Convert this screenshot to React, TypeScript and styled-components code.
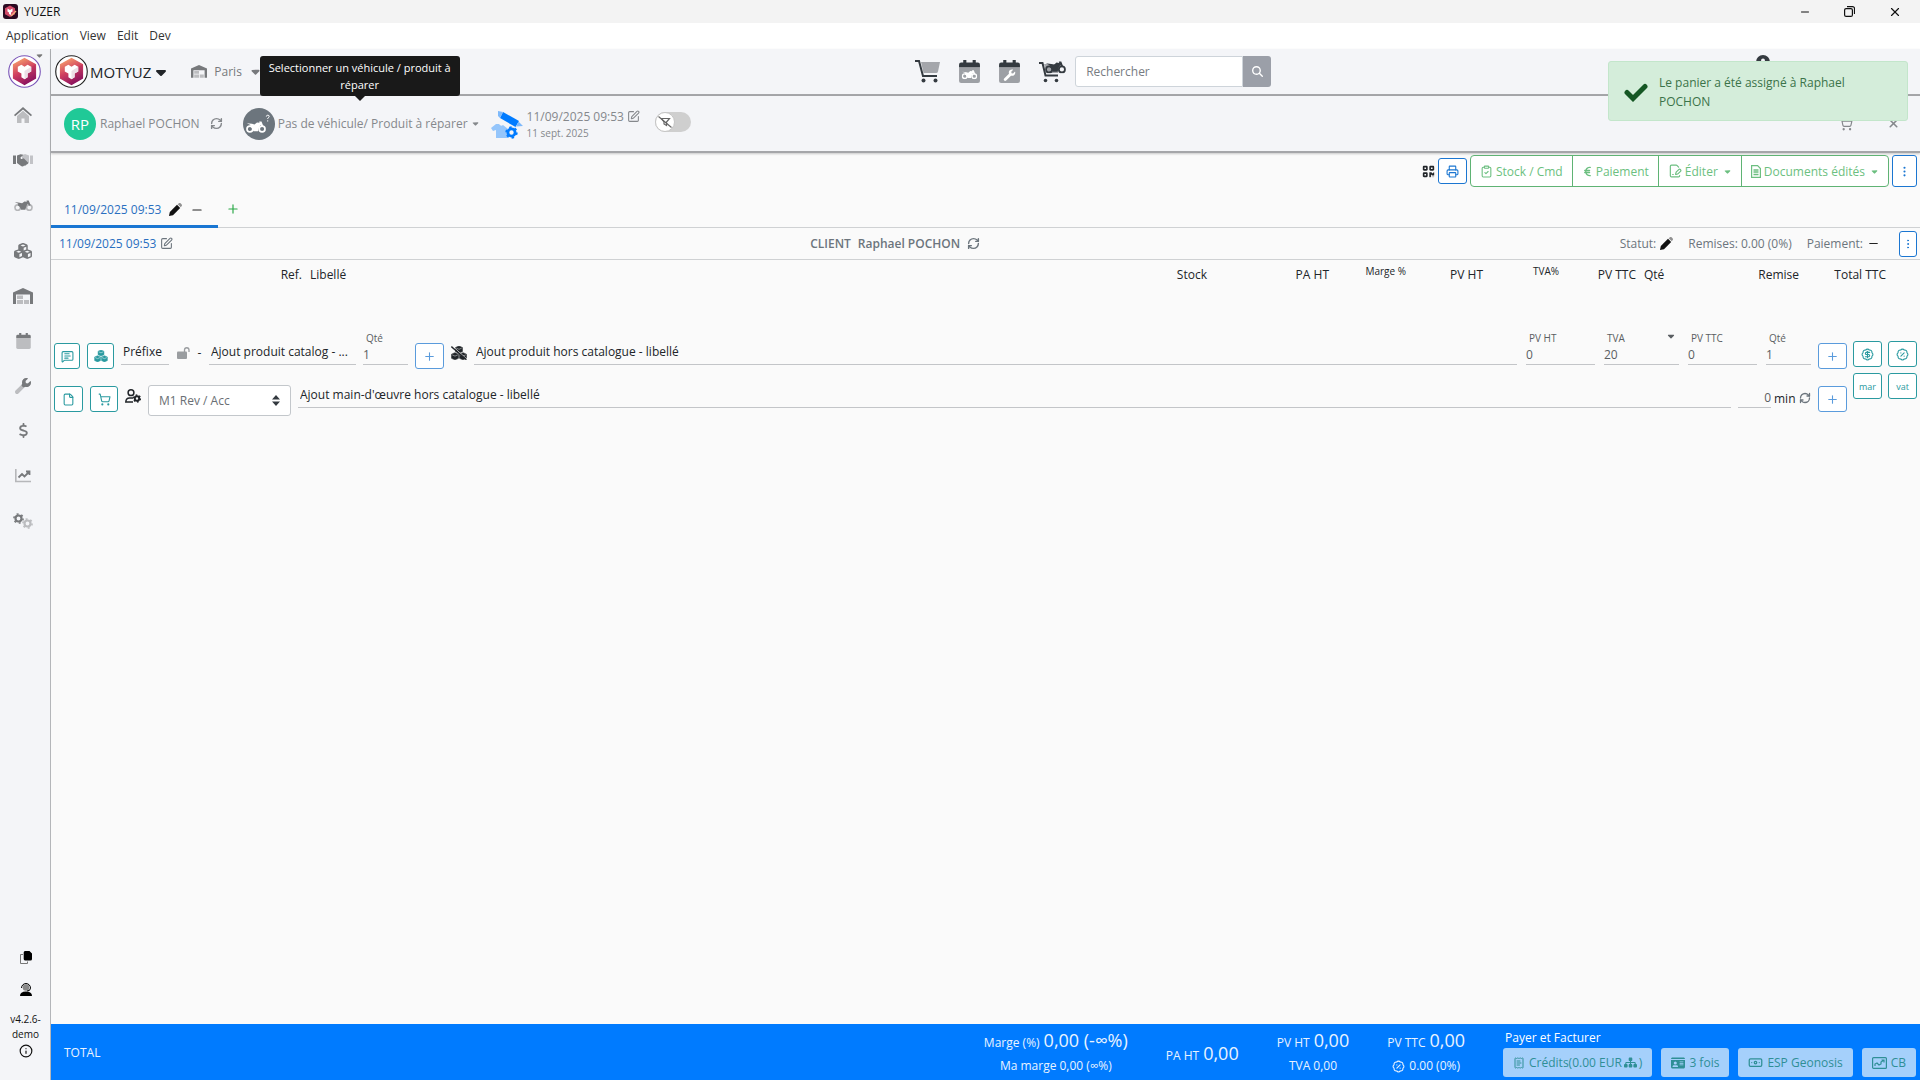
import React from "react";
import styled, { createGlobalStyle, css } from "styled-components";
import { FaDollarSign, FaCaretDown, FaMagnifyingGlass, FaSitemap, FaQrcode, FaCubes, FaCircleUser, FaIdCard, FaEuroSign } from "react-icons/fa6";
import {
  Printer, ClipboardCheck, MessageSquareText, File, EllipsisVertical, Plus, Minus, X,
  SquarePen, RefreshCw, BadgePercent, BadgeDollarSign, ShoppingCart, Info, FilePenLine, Banknote, ReceiptText,
} from "lucide-react";

const Global = createGlobalStyle`
  * { box-sizing: border-box; }
  body { margin: 0; background: #fafafa; }
  body, button, input, select {
    font-family: "Open Sans", "Noto Sans", sans-serif;
    font-size: 12px;
    color: #212529;
  }
  button { cursor: pointer; padding: 0; margin: 0; background: none; border: 0; }
  a { text-decoration: none; color: inherit; }
  svg { flex: none; display: block; }
`;

const Window = styled.div`
  display: flex;
  flex-direction: column;
  min-height: 100vh;
  line-height: 18px;
`;
const TitleBar = styled.header`
  display: flex;
  align-items: center;
  height: 23px;
  padding: 0 3px;
  gap: 6px;
  background: #f3f3f3;
  color: #111;
`;
const WindowControls = styled.div`
  display: flex;
  margin-left: auto;
`;
const WindowButton = styled.button`
  width: 45px;
  height: 20px;
  display: grid;
  place-items: center;
`;
const MenuBar = styled.nav`
  display: flex;
  align-items: center;
  gap: 11px;
  height: 26px;
  padding: 0 6px 2px;
  background: #fff;
`;
const MenuItem = styled.button`
  color: #333;
`;
const Shell = styled.div`
  display: flex;
  flex: 1;
`;
const Sidebar = styled.aside`
  width: 51px;
  flex: none;
  display: flex;
  flex-direction: column;
  align-items: center;
  background: #f4f5f8;
  border-right: 1px solid #b4b6b9;
  padding: 6px 1px 22px 0;
`;
const SideLogo = styled.button`
  position: relative;
  margin-bottom: 5px;
`;
const SideCaret = styled.span`
  position: absolute;
  right: -3px;
  top: -4px;
  color: #777;
`;
const SideLink = styled.a`
  height: 45px;
  width: 100%;
  padding-right: 3px;
  display: grid;
  place-items: center;
  color: #77797c;
`;
const SideFoot = styled.div`
  margin-top: auto;
  display: flex;
  flex-direction: column;
  align-items: center;
  width: 100%;
  font-size: 10px;
  line-height: 15px;
  text-align: center;
  color: #111;
  padding-left: 2px;
`;
const SideTool = styled.button`
  height: 32px;
  width: 32px;
  display: grid;
  place-items: center;
`;
const Version = styled.div`
  padding: 7px 0 2px;
`;
const Main = styled.main`
  flex: 1;
  min-width: 0;
  display: flex;
  flex-direction: column;
`;
const bar = css`
  background: #f4f5f8;
  border-bottom: 2px solid #a5a6a9;
  box-shadow: 0 1px 2px rgba(0, 0, 0, 0.2);
`;
const TopNav = styled.div`
  ${bar}
  display: grid;
  grid-template-columns: minmax(0, 57fr) auto minmax(0, 43fr);
  align-items: center;
  height: 47px;
  padding-left: 4px;
`;
const NavLeft = styled.div`
  display: flex;
  align-items: center;
  gap: 22px;
`;
const Brand = styled.button`
  display: flex;
  align-items: center;
  gap: 2px;
  font-size: 15px;
`;
const Place = styled.button`
  display: flex;
  align-items: center;
  gap: 7px;
  color: #77797c;
`;
const NavCenter = styled.div`
  display: flex;
  align-items: center;
  gap: 19px;
  color: #343a40;
`;
const NavIcon = styled.button`
  color: inherit;
`;
const Search = styled.form`
  display: flex;
  height: 31px;
  margin-left: -10px;
`;
const SearchInput = styled.input`
  width: 168px;
  padding: 0 10px;
  border: 1px solid #ced4da;
  border-radius: 3px 0 0 3px;
  background: #fff;
  &::placeholder { color: #777c82; opacity: 1; }
`;
const SearchButton = styled.button`
  width: 28px;
  display: grid;
  place-items: center;
  color: #fff;
  background: #9b9fa8;
  border-radius: 0 3px 3px 0;
`;
const NavRight = styled.div`
  justify-self: end;
  margin: 0 150px 20px 0;
  color: #343a40;
`;
const ClientBar = styled.div`
  ${bar}
  display: flex;
  align-items: center;
  height: 57px;
  padding: 0 14px 0 13px;
  color: #85888c;
`;
const Round = styled.span<{ $color: string }>`
  width: 32px;
  height: 32px;
  border-radius: 50%;
  display: grid;
  place-items: center;
  background: ${(p) => p.$color};
  color: #fff;
  font-size: 15px;
`;
const Person = styled.div`
  display: flex;
  align-items: center;
  gap: 4px;
  margin-right: 14px;
`;
const IconButton = styled.button`
  color: inherit;
  display: grid;
  place-items: center;
  padding: 0 6px;
`;
const VehicleButton = styled.button`
  position: relative;
  display: flex;
  align-items: center;
  gap: 3px;
  color: inherit;
  margin-right: 11px;
`;
const Tooltip = styled.span`
  position: absolute;
  z-index: 2;
  left: 17px;
  bottom: 44px;
  width: 200px;
  height: 40px;
  padding: 3px 4px;
  border-radius: 3px;
  background: #191919;
  color: #fff;
  font-size: 11px;
  font-weight: 500;
  line-height: 17px;
  text-align: center;
  &::after {
    content: "";
    position: absolute;
    left: 95px;
    top: 40px;
    border: 5px solid transparent;
    border-top-color: #191919;
    border-bottom: 0;
  }
`;
const DateBlock = styled.div`
  display: flex;
  align-items: center;
  gap: 4px;
  line-height: 17px;
  padding-top: 2px;
`;
const DateLine = styled.div`
  display: flex;
  align-items: center;
  gap: 3px;
`;
const Small = styled.div`
  font-size: 10px;
`;
const Toggle = styled.label`
  display: flex;
  width: 36px;
  height: 20px;
  margin: 0 0 3px 15px;
  border-radius: 10px;
  background: #cfcfcf;
  input { appearance: none; margin: 0; width: 0; }
`;
const Knob = styled.span`
  width: 20px;
  height: 20px;
  border-radius: 50%;
  display: grid;
  place-items: center;
  background: #fff;
  border: 1px solid #c4c4c4;
`;
const BarEnd = styled.div`
  margin-left: auto;
  display: flex;
  align-items: center;
  gap: 22px;
`;
const Toast = styled.div`
  position: absolute;
  z-index: 3;
  top: 61px;
  right: 12px;
  width: 300px;
  min-height: 60px;
  display: flex;
  align-items: center;
  gap: 11px;
  padding: 11px 50px 9px 15px;
  border: 1px solid #c3e6cb;
  border-radius: 3px;
  background: #d4edda;
  color: #3b7349;
  line-height: 19px;
  svg { color: #155724; }
`;
const Actions = styled.div`
  display: flex;
  align-items: center;
  justify-content: flex-end;
  gap: 3px;
  padding: 1px 3px 0;
  height: 35px;
`;
const Outline = styled.button<{ $w: number; $h: number; $c: string }>`
  width: ${(p) => p.$w}px;
  height: ${(p) => p.$h}px;
  display: grid;
  place-items: center;
  flex: none;
  border: 1px solid ${(p) => p.$c};
  border-radius: 3px;
  color: ${(p) => p.$c};
  background: #fff;
  font-size: 9px;
`;
const Group = styled.div`
  display: flex;
  border: 1px solid #5fb374;
  border-radius: 4px;
  background: #fff;
`;
const GroupButton = styled.button`
  height: 30px;
  display: flex;
  align-items: center;
  gap: 3px;
  padding: 0 9px;
  color: #6cbf80;
  & + & { border-left: 1px solid #5fb374; }
`;
const GroupCaret = styled(FaCaretDown)`
  margin-left: 2px;
`;
const Tabs = styled.div`
  display: flex;
  height: 40px;
  border-bottom: 1px solid #cfd1d3;
`;
const Tab = styled.div`
  display: flex;
  align-items: center;
  gap: 8px;
  width: 167px;
  padding: 6px 0 0 13px;
  margin-bottom: -1px;
  border-bottom: 3px solid #1976d2;
  color: #2a6fc0;
`;
const AddTab = styled.button`
  padding: 3px 8px 0;
  color: #28a745;
`;
const CartHead = styled.div`
  display: grid;
  grid-template-columns: minmax(0, 89fr) auto minmax(0, 111fr);
  align-items: center;
  height: 32px;
  padding: 0 3px 0 8px;
  border-bottom: 1px solid #cfd1d3;
  color: #6c757d;
`;
const Stamp = styled.div`
  display: flex;
  align-items: center;
  gap: 4px;
  color: #2a6fc0;
  svg { color: #6c757d; }
`;
const Client = styled.div`
  display: flex;
  align-items: center;
  gap: 7px;
  font-weight: 600;
`;
const Status = styled.div`
  display: flex;
  align-items: center;
  justify-content: flex-end;
  gap: 15px;
  span { display: flex; align-items: center; gap: 4px; }
  span:last-of-type { margin-right: 4px; }
`;
const Lines = styled.table`
  width: 100%;
  table-layout: fixed;
  border-collapse: collapse;
  margin: 4px 0 44px;
  th { padding: 0 4px; height: 22px; font-weight: 500; text-align: right; white-space: nowrap; }
`;
const ThLeft = styled.th`
  && { text-align: left; }
`;
const ThSmall = styled.th`
  font-size: 10px;
  vertical-align: top;
  line-height: 14px;
`;
const Entry = styled.form`
  display: flex;
  gap: 6px;
  padding: 0 3px;
`;
const EntryRows = styled.div`
  flex: 1;
  min-width: 0;
`;
const EntryRow = styled.div`
  display: flex;
  align-items: flex-end;
  gap: 7px;
  height: 43px;
  > button { margin-bottom: 4px; }
`;
const Mark = styled.span<{ $w: number; $dim?: boolean }>`
  width: ${(p) => p.$w}px;
  margin-bottom: 11px;
  min-height: 18px;
  display: grid;
  place-items: center;
  color: ${(p) => (p.$dim ? "#9a9da0" : "#212529")};
`;
const line = css`
  border: 0;
  border-bottom: 1px solid #c3c5c8;
  border-radius: 0;
  background: transparent;
  padding: 0;
  outline: 0;
  min-width: 0;
`;
const TextField = styled.input<{ $w?: number }>`
  ${line}
  ${(p) => (p.$w ? `width: ${p.$w}px;` : "flex: 1;")}
  height: 26px;
  margin-bottom: 8px;
  padding: 0 2px;
  text-overflow: ellipsis;
  &::placeholder { color: #212529; opacity: 1; }
`;
const NumberField = styled.label<{ $w: number }>`
  width: ${(p) => p.$w}px;
  margin-bottom: 8px;
  font-size: 10px;
  line-height: 14px;
  color: #5a5e62;
  input { ${line} display: block; width: 100%; height: 20px; color: #5a5e62; }
`;
const LabelText = styled.span`
  display: flex;
  justify-content: space-between;
  padding: 0 3px;
`;
const Fields = styled.div`
  display: flex;
  gap: 9px;
  padding-left: 2px;
`;
const Duration = styled.label`
  display: flex;
  align-items: flex-end;
  gap: 3px;
  width: 73px;
  margin-bottom: 8px;
  svg { margin-bottom: 4px; color: #6c757d; }
  input { ${line} width: 33px; height: 20px; text-align: right; color: #5a5e62; }
`;
const SelectWrap = styled.label`
  position: relative;
  width: 143px;
  svg { position: absolute; right: 11px; top: 10px; pointer-events: none; }
`;
const Select = styled.select`
  appearance: none;
  width: 100%;
  height: 31px;
  display: block;
  padding: 0 10px;
  border: 1px solid #c3c7cb;
  border-radius: 3px;
  background: #fff;
  color: #6a6f74;
`;
const SideGrid = styled.div`
  display: grid;
  grid-template-columns: 29px 29px;
  grid-auto-rows: 26px;
  gap: 6px;
  margin-top: 11px;
`;
const Footer = styled.footer`
  margin-top: auto;
  display: flex;
  align-items: center;
  gap: 38px;
  height: 56px;
  padding: 2px 4px 0 13px;
  background: #007bff;
  color: #e9f3ff;
`;
const Total = styled.strong`
  font-weight: 400;
  margin-right: auto;
`;
const Sum = styled.div`
  text-align: center;
  white-space: nowrap;
`;
const SumLine = styled.div`
  display: flex;
  justify-content: center;
  align-items: baseline;
  gap: 4px;
  height: 26px;
  line-height: 26px;
  b { font-weight: 400; font-size: 18px; }
  svg { align-self: center; }
`;
const Pay = styled.div`
  display: flex;
  flex-direction: column;
  > span { padding-left: 2px; color: #fff; }
`;
const PayRow = styled.div`
  display: flex;
  gap: 9px;
  margin-top: 1px;
`;
const PayButton = styled.button`
  display: flex;
  align-items: center;
  gap: 4px;
  height: 29px;
  padding: 0 10px;
  border-radius: 3px;
  background: #a5d0fb;
  color: #2f8f96;
`;
const PayText = styled.span`
  display: flex;
  align-items: center;
  gap: 2px;
`;

function Logo({ ring }: { ring: string }) {
  return (
    <svg width="33" height="33" viewBox="0 0 32 32">
      <defs>
        <linearGradient id="hex" x1="0.2" y1="0" x2="0.6" y2="1">
          <stop offset="0" stopColor="#f7a06c" />
          <stop offset="0.5" stopColor="#d0405f" />
          <stop offset="1" stopColor="#8c1260" />
        </linearGradient>
      </defs>
      <circle cx="16" cy="16" r="15.3" fill="#fff" stroke={ring} strokeWidth="1.1" />
      <path d="M16 3.5 26.5 9.3v13.2L16 28.5 5.5 22.5V9.3z" fill="url(#hex)" stroke="url(#hex)" strokeWidth="1.5" strokeLinejoin="round" />
      <path d="M16 16v12.5l10.5-6V9.3z" fill="#8c1260" opacity=".2" />
      <path d="M9.500 11.500l3.500-2 3 2 3-2 3.500 2v4.500l-3.500 2v3.500L16 23.500 13 21.500V18l-3.500-2z" fill="#fff" />
      <path d="M16 15.500l6.500-4V16L19 18v3.500l-3 2z" fill="#ecdfe6" />
    </svg>
  );
}
const AppIcon = () => (
  <svg width="15" height="15" viewBox="0 0 15 15">
    <rect width="15" height="15" rx="3" fill="#2a0a20" />
    <path d="M7 1.5l5 2.8v6L7 13 2 10.3v-6z" fill="#d24a68" />
    <path d="M4.500 4.500L7 6l2.500-1.500v3L8 8.500V11L6 10V8.500l-1.500-1z" fill="#fff" />
    <path d="M8 12l5-5" stroke="#f2b07b" strokeWidth="1.5" />
  </svg>
);
const Restore = () => (
  <svg width="11" height="11" viewBox="0 0 11 11" fill="none" stroke="#111" strokeWidth="1.2">
    <rect x=".6" y="2.6" width="7.8" height="7.8" rx="1.5" />
    <path d="M3 .6h5.500a2 2 0 0 1 2 2V8" />
  </svg>
);
const House = () => (
  <svg width="18" height="17" viewBox="0 0 18 17" fill="currentColor">
    <path opacity=".45" d="M3 9l6-5.300L15 9v7h-4.500v-4.500h-3V16H3z" />
    <path d="M9 0L18 8l-1.100 1.300L9 2.500 1.100 9.300 0 8z" />
  </svg>
);
const Hands = () => (
  <svg width="20" height="13" viewBox="0 0 20 13" fill="currentColor">
    <path d="M0 1.500h3V10H0z" />
    <path opacity=".4" d="M17 1.500h3V10h-3zM9 1.500l3-1.500 4 1.500V9l-1.500 1L9 5z" />
    <path d="M4 1.500L7.500.3l3 .5L7.500 3.500c0 2 2 2 3.200.8L15 8.500c.3 1-.5 2-1.500 2-.3 1-1.300 1.500-2.300 1-1 1.200-2.500 1.200-3.500.2L4 9z" />
  </svg>
);
const Moto = ({ w = 20, wheel = 1, x, y }: { w?: number; wheel?: number; x?: number; y?: number }) => (
  <svg x={x} y={y} width={w} height={w * 0.6} viewBox="0 0 20 12" fill="currentColor" stroke="none">
    <g opacity={wheel} fill="none" stroke="currentColor" strokeWidth="1.7">
      <circle cx="3.9" cy="8" r="2.9" />
      <circle cx="16.1" cy="8" r="2.9" />
    </g>
    <path d="M.8 2.200l5.200.6 2.500.7L11 1.500l2.500.3L13.200.5h2.300l1 2.500 1 2.500-1.500.5-1.500-2-1.500 2.500-1 3.700H7.500L6 7 4 5.500 4.500 4z" />
  </svg>
);
const Warehouse = ({ w = 20 }: { w?: number }) => (
  <svg width={w} height={w * 0.8} viewBox="0 0 20 16" fill="currentColor">
    <path d="M0 16V4.500L10 0l10 4.500V16h-3V6.500H3V16z" />
    <path opacity=".45" d="M4 7.500h6v3.500H4zM4 12h6v4H4zM11 12h5v4h-5z" />
  </svg>
);
const CalBack = () => (
  <>
    <path opacity=".45" d="M0 7h20v13a2 2 0 0 1-2 2H2a2 2 0 0 1-2-2z" />
    <path d="M4 0h3v2.500h6V0h3v2.500h2a2 2 0 0 1 2 2V7H0V4.500a2 2 0 0 1 2-2h2z" />
  </>
);
const wrenchPath =
  "M507.700 109.100c-2.200-9-13.500-12.100-20.100-5.500l-74.400 74.400-67.900-11.300L334 98.900l74.400-74.400c6.600-6.600 3.400-17.900-5.700-20.200-47.400-11.700-99.600.9-136.600 37.900-39.600 39.600-50.500 97.100-34.100 147.200L18.700 402.800c-25 25-25 65.500 0 90.500 25 25 65.500 25 90.500 0l213.200-213.200c50.100 16.700 107.500 5.700 147.400-34.200 37.100-37.100 49.700-89.300 37.900-136.800z";
const Calendar = () => (
  <svg width="15" height="16" viewBox="0 0 20 22" fill="currentColor"><CalBack /></svg>
);
const CalendarMoto = () => (
  <svg width="21" height="23" viewBox="0 0 20 22" fill="currentColor">
    <CalBack />
    <g color="#fff"><Moto x={2.5} y={9.5} w={15} /></g>
  </svg>
);
const CalendarWrench = () => (
  <svg width="21" height="23" viewBox="0 0 20 22" fill="currentColor">
    <CalBack />
    <path fill="#fff" transform="translate(4.500 9) scale(.0215)" d={wrenchPath} />
  </svg>
);
const Wrench = () => (
  <svg width="16" height="16" viewBox="0 0 512 512" fill="currentColor">
    <clipPath id="wh"><path d="M200 0h312v300H260l-60-80z" /></clipPath>
    <path opacity=".45" d={wrenchPath} />
    <path clipPath="url(#wh)" d={wrenchPath} />
  </svg>
);
const Chart = () => (
  <svg width="16" height="14" viewBox="0 0 16 14" fill="none" stroke="currentColor">
    <path opacity=".5" d="M.8 0v12.500H16" strokeWidth="1.6" />
    <path d="M3.500 8.500L7 5l2.500 2.500L14 3M11 2.500h3.500V6" strokeWidth="1.8" />
  </svg>
);
const Gears = () => (
  <svg width="20" height="16" viewBox="0 0 20 16" fill="none" stroke="currentColor">
    <circle cx="5.5" cy="5.5" r="3" strokeWidth="2.2" />
    <circle cx="5.5" cy="5.5" r="4.6" strokeWidth="1.5" strokeDasharray="2 2.8" />
    <g opacity=".45">
      <circle cx="14.5" cy="10.5" r="3" strokeWidth="2.2" />
      <circle cx="14.5" cy="10.5" r="4.6" strokeWidth="1.5" strokeDasharray="2 2.8" />
    </g>
  </svg>
);
const Cart = () => (
  <svg width="25" height="23" viewBox="0 0 25 23" fill="none" stroke="currentColor">
    <path d="M6 2h19l-2 9.500a2 2 0 0 1-2 1.500H8.500z" fill="currentColor" opacity=".42" stroke="none" />
    <path d="M0 1h4l4 15h14" strokeWidth="2" />
    <circle cx="8.5" cy="20.5" r="2" fill="currentColor" stroke="none" />
    <circle cx="20.5" cy="20.5" r="2" fill="currentColor" stroke="none" />
  </svg>
);
const CartMoto = () => (
  <svg width="27" height="23" viewBox="0 0 27 23" fill="none" stroke="currentColor">
    <path d="M5 4h15l-1 9H8z" fill="currentColor" opacity=".42" stroke="none" />
    <path d="M0 3h3.500l3 12.500H19" strokeWidth="2" />
    <circle cx="6.5" cy="20.5" r="1.8" fill="currentColor" stroke="none" />
    <circle cx="17.5" cy="20.5" r="1.8" fill="currentColor" stroke="none" />
    <Moto x={6} y={1} w={21} />
  </svg>
);
const MotoQuestion = () => (
  <svg width="26" height="20" viewBox="0 0 26 20" fill="currentColor">
    <Moto x={0} y={7} w={20} />
    <path d="M20.300 2.600q.1-1.400 1.500-1.400t1.400 1.200q0 .8-.8 1.200-.7.400-.7 1.400M21.700 6.300v1.200" fill="none" stroke="currentColor" strokeWidth="1" />
  </svg>
);
const Check = () => (
  <svg width="24" height="24" viewBox="0 0 24 24" fill="none" stroke="currentColor" strokeWidth="5" strokeLinecap="round">
    <path d="M3 12.500l6 6L21 6.500" />
  </svg>
);
const FilterOff = () => (
  <svg width="14" height="12" viewBox="0 0 14 12" fill="none" stroke="#666" strokeWidth="1.2">
    <path d="M3.500 2.500h8L8.500 6v3.500L6 8V6z" />
    <path d="M.5.5l13 11" />
  </svg>
);
const Pencil = () => (
  <svg width="13" height="13" viewBox="0 0 13 13" fill="#111">
    <path d="M0 13l.8-4L8 1.800 11.200 5 4 12.200z" />
    <path opacity=".45" d="M8.700 1.200L9.900.3a1.300 1.300 0 0 1 1.700 0l1.100 1.100a1.300 1.300 0 0 1 0 1.700l-.9 1.200z" />
  </svg>
);
const Custom = () => (
  <svg width="32" height="28" viewBox="0 0 32 28" fill="#007bff">
    <path d="M0 17l5-4h3q2 3 4 1l5 4v9H5v-8l-3 1z" fill="#94c5fb" />
    <path d="M12 1l16 9-3.500 6L9 7z" />
    <path d="M7 0l5 1-3 6-2-2z M27.500 10.500l-2.500 5 7-.5z" fill="#7db9fb" />
    <circle cx="20.5" cy="21.5" r="3.6" fill="none" stroke="#007bff" strokeWidth="2.8" />
    <circle cx="20.5" cy="21.5" r="5.4" fill="none" stroke="#007bff" strokeWidth="1.6" strokeDasharray="2.5 3.1" />
  </svg>
);
const Unlock = () => (
  <svg width="13" height="12" viewBox="0 0 13 12" fill="currentColor">
    <rect y="4.5" width="10" height="7.5" rx="1" />
    <path d="M7.500 5V3a2.200 2.200 0 0 1 4.500 0v2" fill="none" stroke="currentColor" strokeWidth="1.3" />
  </svg>
);
const cubes =
  "M7 0l3 1.300v3.500L7 6.200 4 4.800V1.300zM3.500 5.800l3 1.300v3.700l-3 1.300-3-1.300V7.100zM10.500 5.800l3 1.300v3.700l-3 1.300-3-1.300V7.100z";
const cubeEdges = "M4.600 1.800L7 2.900l2.400-1.100M1 7.700l2.500 1.100L6 7.700M8 7.700l2.500 1.100L13 7.700";
const CubesSolid = () => (
  <svg width="14" height="12" viewBox="0 0 14 12.2" fill="currentColor">
    <path d={cubes} stroke="currentColor" strokeWidth=".5" />
    <path d={cubeEdges} fill="none" stroke="#fff" strokeWidth=".5" />
  </svg>
);
const CubesOff = () => (
  <svg width="16" height="14" viewBox="0 0 14 12.2" fill="currentColor">
    <path d={cubes} stroke="currentColor" strokeWidth=".5" />
    <path d={cubeEdges} fill="none" stroke="#fafafa" strokeWidth=".4" />
    <path d="M1.200 0L14 11.500" stroke="#fafafa" strokeWidth=".7" />
    <path d="M.3.500L13.500 12" stroke="#212529" strokeWidth="1.2" />
  </svg>
);
const UserGear = () => (
  <svg width="16" height="14" viewBox="0 0 16 14" fill="none" stroke="currentColor" strokeWidth="1.5">
    <circle cx="6" cy="3.7" r="2.9" />
    <path d="M8 9H4.500Q1 9 .8 13H8" />
    <circle cx="12" cy="9.5" r="2.2" strokeWidth="2" />
    <circle cx="12" cy="9.5" r="3.4" strokeDasharray="1.6 1.96" />
  </svg>
);
const UpDown = () => (
  <svg width="8" height="11" viewBox="0 0 8 11" fill="#343a40"><path d="M4 0l4 4.500H0zM4 11l4-4.500H0z" /></svg>
);
const CopyIcon = () => (
  <svg width="12" height="13" viewBox="0 0 12 13">
    <path d="M5 0h4.500L12 2.500V8a1.500 1.500 0 0 1-1.500 1.500H5A1.500 1.500 0 0 1 3.700 8V1.500A1.500 1.500 0 0 1 5 0z" fill="#000" />
    <path d="M3 3.500H.5v9H7.500v-2" fill="none" stroke="#777" />
  </svg>
);
const Support = () => (
  <svg width="12" height="13" viewBox="0 0 12 13">
    <path d="M0 13c0-3 2-4.500 6-4.500s6 1.500 6 4.500z" />
    <circle cx="6" cy="4.5" r="3.3" fill="#888" />
    <path d="M1.500 5a4.500 4.500 0 0 1 9 0q0 3-3.500 3" fill="none" stroke="#000" />
  </svg>
);
const DocMark = () => (
  <svg width="10" height="13" viewBox="0 0 10 13" fill="none" stroke="currentColor">
    <path d="M.6.6h6L9.400 3.500v8.900H.6z" strokeWidth="1.2" />
    <path d="M2.500 5h5M2.500 7h5M2.500 9.500h5" strokeWidth="1.5" />
  </svg>
);
const CardChart = () => (
  <svg width="15" height="12" viewBox="0 0 15 12" fill="none" stroke="currentColor" strokeWidth="1.2">
    <rect x=".6" y=".6" width="13.8" height="10.8" rx="1" />
    <path d="M3 9V7l2-1 2 2 2-1V5l3-2M9.500 3H12v2.500" />
  </svg>
);
const Refresh = ({ size = 13 }: { size?: number }) => <RefreshCw size={size} strokeWidth={2.6} />;

const BLUE = "#1b76d1";
const TEAL = "#2a9aa0";
const SKY = "#5a9bdc";

const nav: [string, React.ReactNode][] = [
  ["Accueil", <House />],
  ["Clients", <Hands />],
  ["Véhicules", <Moto w={19} wheel={0.5} />],
  ["Produits", <FaCubes size={18} />],
  ["Stock", <Warehouse />],
  ["Agenda", <Calendar />],
  ["Atelier", <Wrench />],
  ["Finance", <FaDollarSign size={15} />],
  ["Statistiques", <Chart />],
  ["Réglages", <Gears />],
];

export default function App() {
  return (
    <Window>
      <Global />
      <TitleBar>
        <AppIcon />
        YUZER
        <WindowControls>
          <WindowButton aria-label="Réduire"><Minus size={12} color="#111" /></WindowButton>
          <WindowButton aria-label="Restaurer"><Restore /></WindowButton>
          <WindowButton aria-label="Fermer"><X size={14} color="#111" /></WindowButton>
        </WindowControls>
      </TitleBar>
      <MenuBar>
        {["Application", "View", "Edit", "Dev"].map((m) => <MenuItem key={m}>{m}</MenuItem>)}
      </MenuBar>
      <Toast role="status">
        <Check />
        Le panier a été assigné à Raphael POCHON
      </Toast>
      <Shell>
        <Sidebar>
          <SideLogo aria-label="Profil">
            <Logo ring="#7a55b8" />
            <SideCaret><FaCaretDown size={9} /></SideCaret>
          </SideLogo>
          {nav.map(([name, icon]) => <SideLink key={name} href="#" aria-label={name}>{icon}</SideLink>)}
          <SideFoot>
            <SideTool aria-label="Copier"><CopyIcon /></SideTool>
            <SideTool aria-label="Support"><Support /></SideTool>
            <Version>v4.2.6-<br />demo</Version>
            <Info size={14} />
          </SideFoot>
        </Sidebar>
        <Main>
          <TopNav>
            <NavLeft>
              <Brand><Logo ring="#222" />MOTYUZ<FaCaretDown size={16} /></Brand>
              <Place><Warehouse w={16} />Paris<FaCaretDown size={13} /></Place>
            </NavLeft>
            <NavCenter>
              <NavIcon aria-label="Panier"><Cart /></NavIcon>
              <NavIcon aria-label="Agenda véhicules"><CalendarMoto /></NavIcon>
              <NavIcon aria-label="Agenda atelier"><CalendarWrench /></NavIcon>
              <NavIcon aria-label="Panier véhicules"><CartMoto /></NavIcon>
              <Search>
                <SearchInput aria-label="Rechercher" placeholder="Rechercher" />
                <SearchButton type="button" aria-label="Lancer la recherche"><FaMagnifyingGlass size={11} /></SearchButton>
              </Search>
            </NavCenter>
            <NavRight><FaCircleUser size={14} /></NavRight>
          </TopNav>
          <ClientBar>
            <Person>
              <Round $color="#20c997">RP</Round>
              Raphael POCHON
              <IconButton aria-label="Changer de client"><Refresh /></IconButton>
            </Person>
            <VehicleButton>
              <Round $color="#6c757d"><MotoQuestion /></Round>
              Pas de véhicule/ Produit à réparer
              <FaCaretDown size={9} />
              <Tooltip role="tooltip">Selectionner un véhicule / produit à réparer</Tooltip>
            </VehicleButton>
            <DateBlock>
              <Custom />
              <div>
                <DateLine>11/09/2025 09:53<SquarePen size={13} /></DateLine>
                <Small>11 sept. 2025</Small>
              </div>
            </DateBlock>
            <Toggle>
              <input type="checkbox" aria-label="Filtrer" />
              <Knob><FilterOff /></Knob>
            </Toggle>
            <BarEnd>
              <IconButton aria-label="Panier"><ShoppingCart size={14} /></IconButton>
              <IconButton aria-label="Fermer"><X size={13} strokeWidth={3} /></IconButton>
            </BarEnd>
          </ClientBar>
          <Actions>
            <FaQrcode size={13} />
            <Outline $w={29} $h={26} $c={BLUE} aria-label="Imprimer"><Printer size={13} /></Outline>
            <Group>
              <GroupButton><ClipboardCheck size={13} />Stock / Cmd</GroupButton>
              <GroupButton><FaEuroSign size={11} />Paiement</GroupButton>
              <GroupButton><FilePenLine size={14} />Éditer<GroupCaret size={9} /></GroupButton>
              <GroupButton><DocMark />Documents édités<GroupCaret size={9} /></GroupButton>
            </Group>
            <Outline $w={25} $h={32} $c={BLUE} aria-label="Plus d'actions"><EllipsisVertical size={13} /></Outline>
          </Actions>
          <Tabs>
            <Tab>11/09/2025 09:53<Pencil /><Minus size={14} color="#222" /></Tab>
            <AddTab aria-label="Ajouter un onglet"><Plus size={14} /></AddTab>
          </Tabs>
          <CartHead>
            <Stamp>11/09/2025 09:53<SquarePen size={13} /></Stamp>
            <Client><span>CLIENT</span>Raphael POCHON<Refresh /></Client>
            <Status>
              <span>Statut: <Pencil /></span>
              <span>Remises: 0.00 (0%)</span>
              <span>Paiement: <Minus size={13} color="#222" /></span>
              <Outline $w={18} $h={26} $c={BLUE} aria-label="Options"><EllipsisVertical size={12} /></Outline>
            </Status>
          </CartHead>
          <Lines>
            <colgroup>
              <col width="255" /><col /><col width="100" /><col width="122" /><col width="77" /><col width="77" />
              <col width="76" /><col width="77" /><col width="60" /><col width="103" /><col width="87" /><col width="30" />
            </colgroup>
            <thead>
              <tr>
                <th>Ref.</th><ThLeft>Libellé</ThLeft><th>Stock</th><th>PA HT</th><ThSmall>Marge %</ThSmall><th>PV HT</th>
                <ThSmall>TVA%</ThSmall><th>PV TTC</th><ThLeft>Qté</ThLeft><th>Remise</th><th>Total TTC</th><th />
              </tr>
            </thead>
          </Lines>
          <Entry>
            <EntryRows>
              <EntryRow>
                <Outline type="button" $w={26} $h={26} $c={TEAL} aria-label="Commentaire"><MessageSquareText size={13} /></Outline>
                <Outline type="button" $w={27} $h={26} $c={TEAL} aria-label="Produits"><CubesSolid /></Outline>
                <TextField $w={48} aria-label="Préfixe" placeholder="Préfixe" />
                <Mark $w={14} $dim><Unlock /></Mark>
                <Mark $w={5}>-</Mark>
                <TextField $w={147} aria-label="Ajout produit catalogue" placeholder="Ajout produit catalog - ..." />
                <NumberField $w={45}><LabelText>Qté</LabelText><input defaultValue="1" /></NumberField>
                <Outline type="button" $w={29} $h={26} $c={SKY} aria-label="Ajouter"><Plus size={13} /></Outline>
                <Mark $w={16}><CubesOff /></Mark>
                <TextField aria-label="Ajout produit hors catalogue" placeholder="Ajout produit hors catalogue - libellé" />
                <Fields>
                  <NumberField $w={69}><LabelText>PV HT</LabelText><input defaultValue="0" /></NumberField>
                  <NumberField $w={75}><LabelText>TVA<FaCaretDown size={10} /></LabelText><input defaultValue="20" /></NumberField>
                  <NumberField $w={69}><LabelText>PV TTC</LabelText><input defaultValue="0" /></NumberField>
                  <NumberField $w={45}><LabelText>Qté</LabelText><input defaultValue="1" /></NumberField>
                </Fields>
                <Outline type="button" $w={29} $h={26} $c={SKY} aria-label="Ajouter"><Plus size={13} /></Outline>
              </EntryRow>
              <EntryRow>
                <Outline type="button" $w={29} $h={26} $c={TEAL} aria-label="Document"><File size={13} /></Outline>
                <Outline type="button" $w={28} $h={26} $c={TEAL} aria-label="Panier"><ShoppingCart size={13} /></Outline>
                <Mark $w={16}><UserGear /></Mark>
                <SelectWrap>
                  <Select aria-label="Main-d'œuvre" defaultValue="m1"><option value="m1">M1 Rev / Acc</option></Select>
                  <UpDown />
                </SelectWrap>
                <TextField aria-label="Ajout main-d'œuvre" placeholder="Ajout main-d'œuvre hors catalogue - libellé" />
                <Duration><input aria-label="Durée" defaultValue="0" />min<Refresh size={12} /></Duration>
                <Outline type="button" $w={29} $h={26} $c={SKY} aria-label="Ajouter"><Plus size={13} /></Outline>
              </EntryRow>
            </EntryRows>
            <SideGrid>
              <Outline type="button" $w={29} $h={26} $c={TEAL} aria-label="Remise en valeur"><BadgeDollarSign size={13} /></Outline>
              <Outline type="button" $w={29} $h={26} $c={TEAL} aria-label="Remise en pourcentage"><BadgePercent size={13} /></Outline>
              <Outline type="button" $w={29} $h={26} $c={TEAL}>mar</Outline>
              <Outline type="button" $w={29} $h={26} $c={TEAL}>vat</Outline>
            </SideGrid>
          </Entry>
          <Footer>
            <Total>TOTAL</Total>
            <Sum><SumLine>Marge (%) <b>0,00 (-∞%)</b></SumLine><SumLine>Ma marge 0,00 (∞%)</SumLine></Sum>
            <Sum><SumLine>PA HT <b>0,00</b></SumLine></Sum>
            <Sum><SumLine>PV HT <b>0,00</b></SumLine><SumLine>TVA 0,00</SumLine></Sum>
            <Sum><SumLine>PV TTC <b>0,00</b></SumLine><SumLine><BadgePercent size={13} /> 0.00 (0%)</SumLine></Sum>
            <Pay>
              <span>Payer et Facturer</span>
              <PayRow>
                <PayButton><ReceiptText size={12} /><PayText>Crédits(0.00 EUR <FaSitemap size={13} />)</PayText></PayButton>
                <PayButton><FaIdCard size={14} />3 fois</PayButton>
                <PayButton><Banknote size={15} />ESP Geonosis</PayButton>
                <PayButton><CardChart />CB</PayButton>
              </PayRow>
            </Pay>
          </Footer>
        </Main>
      </Shell>
    </Window>
  );
}
